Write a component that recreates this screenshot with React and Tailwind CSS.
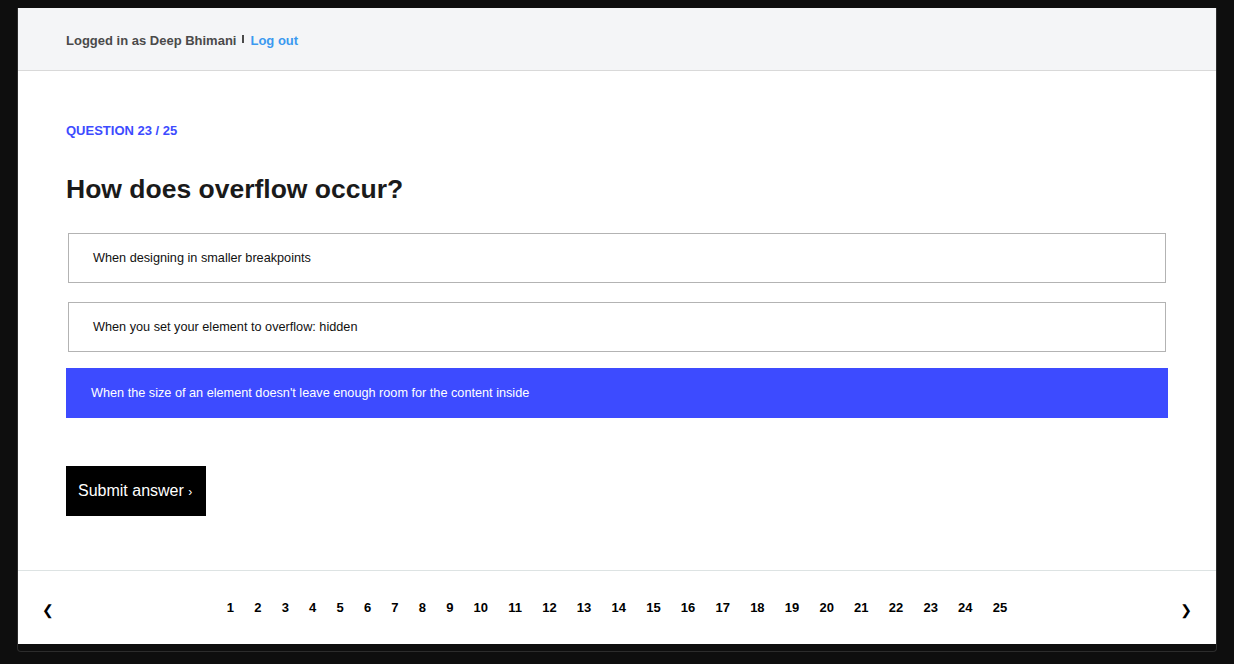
import { useState } from "react";

const options = [
  "When designing in smaller breakpoints",
  "When you set your element to overflow: hidden",
  "When the size of an element doesn't leave enough room for the content inside",
];

const pages = Array.from({ length: 25 }, (_, i) => i + 1);

export default function App() {
  const [selected, setSelected] = useState(2);

  return (
    <div className="min-h-screen bg-[#0e0e0e] pt-[8px] pl-[17px] font-['Liberation_Sans',Arial,sans-serif]">
      <div className="w-[1200px] h-[644px] border-x border-b border-[#2c2c2c] rounded-b-[4px] overflow-hidden">
        <div className="bg-white h-[636px] flex flex-col">
          {/* Header */}
          <div className="h-[63px] shrink-0 bg-[#f4f5f7] border-b border-[#d9d9d9] px-[48px] pt-[3px] flex items-center">
            <span className="text-[13px] font-bold text-[#4a4a4a]">
              Logged in as Deep Bhimani
            </span>
            <span className="inline-block w-[2px] h-[8px] bg-[#4a4a4a] mx-[6px] -translate-y-[2px]"></span>
            <a href="#" className="text-[13px] font-bold text-[#3b99f0]">
              Log out
            </a>
          </div>

          {/* Question */}
          <div className="flex-1 px-[48px] pt-[52px]">
            <p className="text-[13px] leading-[16px] font-bold text-[#3d4bff]">
              QUESTION 23 / 25
            </p>
            <h1 className="mt-[34px] text-[26.5px] leading-[32px] font-bold text-[#1a1a1a]">
              How does overflow occur?
            </h1>

            <div className="mt-[28px] flex flex-col">
              {options.map((opt, i) =>
                selected === i ? (
                  <button
                    key={i}
                    onClick={() => setSelected(i)}
                    className="h-[50px] mt-[16px] pt-[2px] bg-[#3d4bff] text-white text-[12.7px] text-left px-[25px]"
                  >
                    {opt}
                  </button>
                ) : (
                  <button
                    key={i}
                    onClick={() => setSelected(i)}
                    className={`${i === 0 ? "" : "mt-[19px]"} h-[50px] pt-[2px] mx-[2px] border border-[#b3b3b3] bg-white text-[#111] text-[12.7px] text-left px-[24px]`}
                  >
                    {opt}
                  </button>
                )
              )}
            </div>

            <button className="mt-[48px] w-[140px] h-[50px] bg-black text-white text-[16px] text-left pl-[12px]">
              Submit answer <span className="text-[12px]">›</span>
            </button>
          </div>

          {/* Pagination */}
          <div className="h-[74px] shrink-0 border-t border-[#dde3e3] px-[24px] flex items-center justify-between">
            <button className="text-[14px] text-black translate-y-[3px] font-['DejaVu_Sans',sans-serif]">
              ❮
            </button>
            <div className="flex items-center gap-[20.2px]">
              {pages.map((p) => (
                <button key={p} className="text-[13px] font-bold text-black">
                  {p}
                </button>
              ))}
            </div>
            <button className="text-[14px] text-black translate-y-[3px] font-['DejaVu_Sans',sans-serif]">
              ❯
            </button>
          </div>
        </div>
      </div>
    </div>
  );
}
